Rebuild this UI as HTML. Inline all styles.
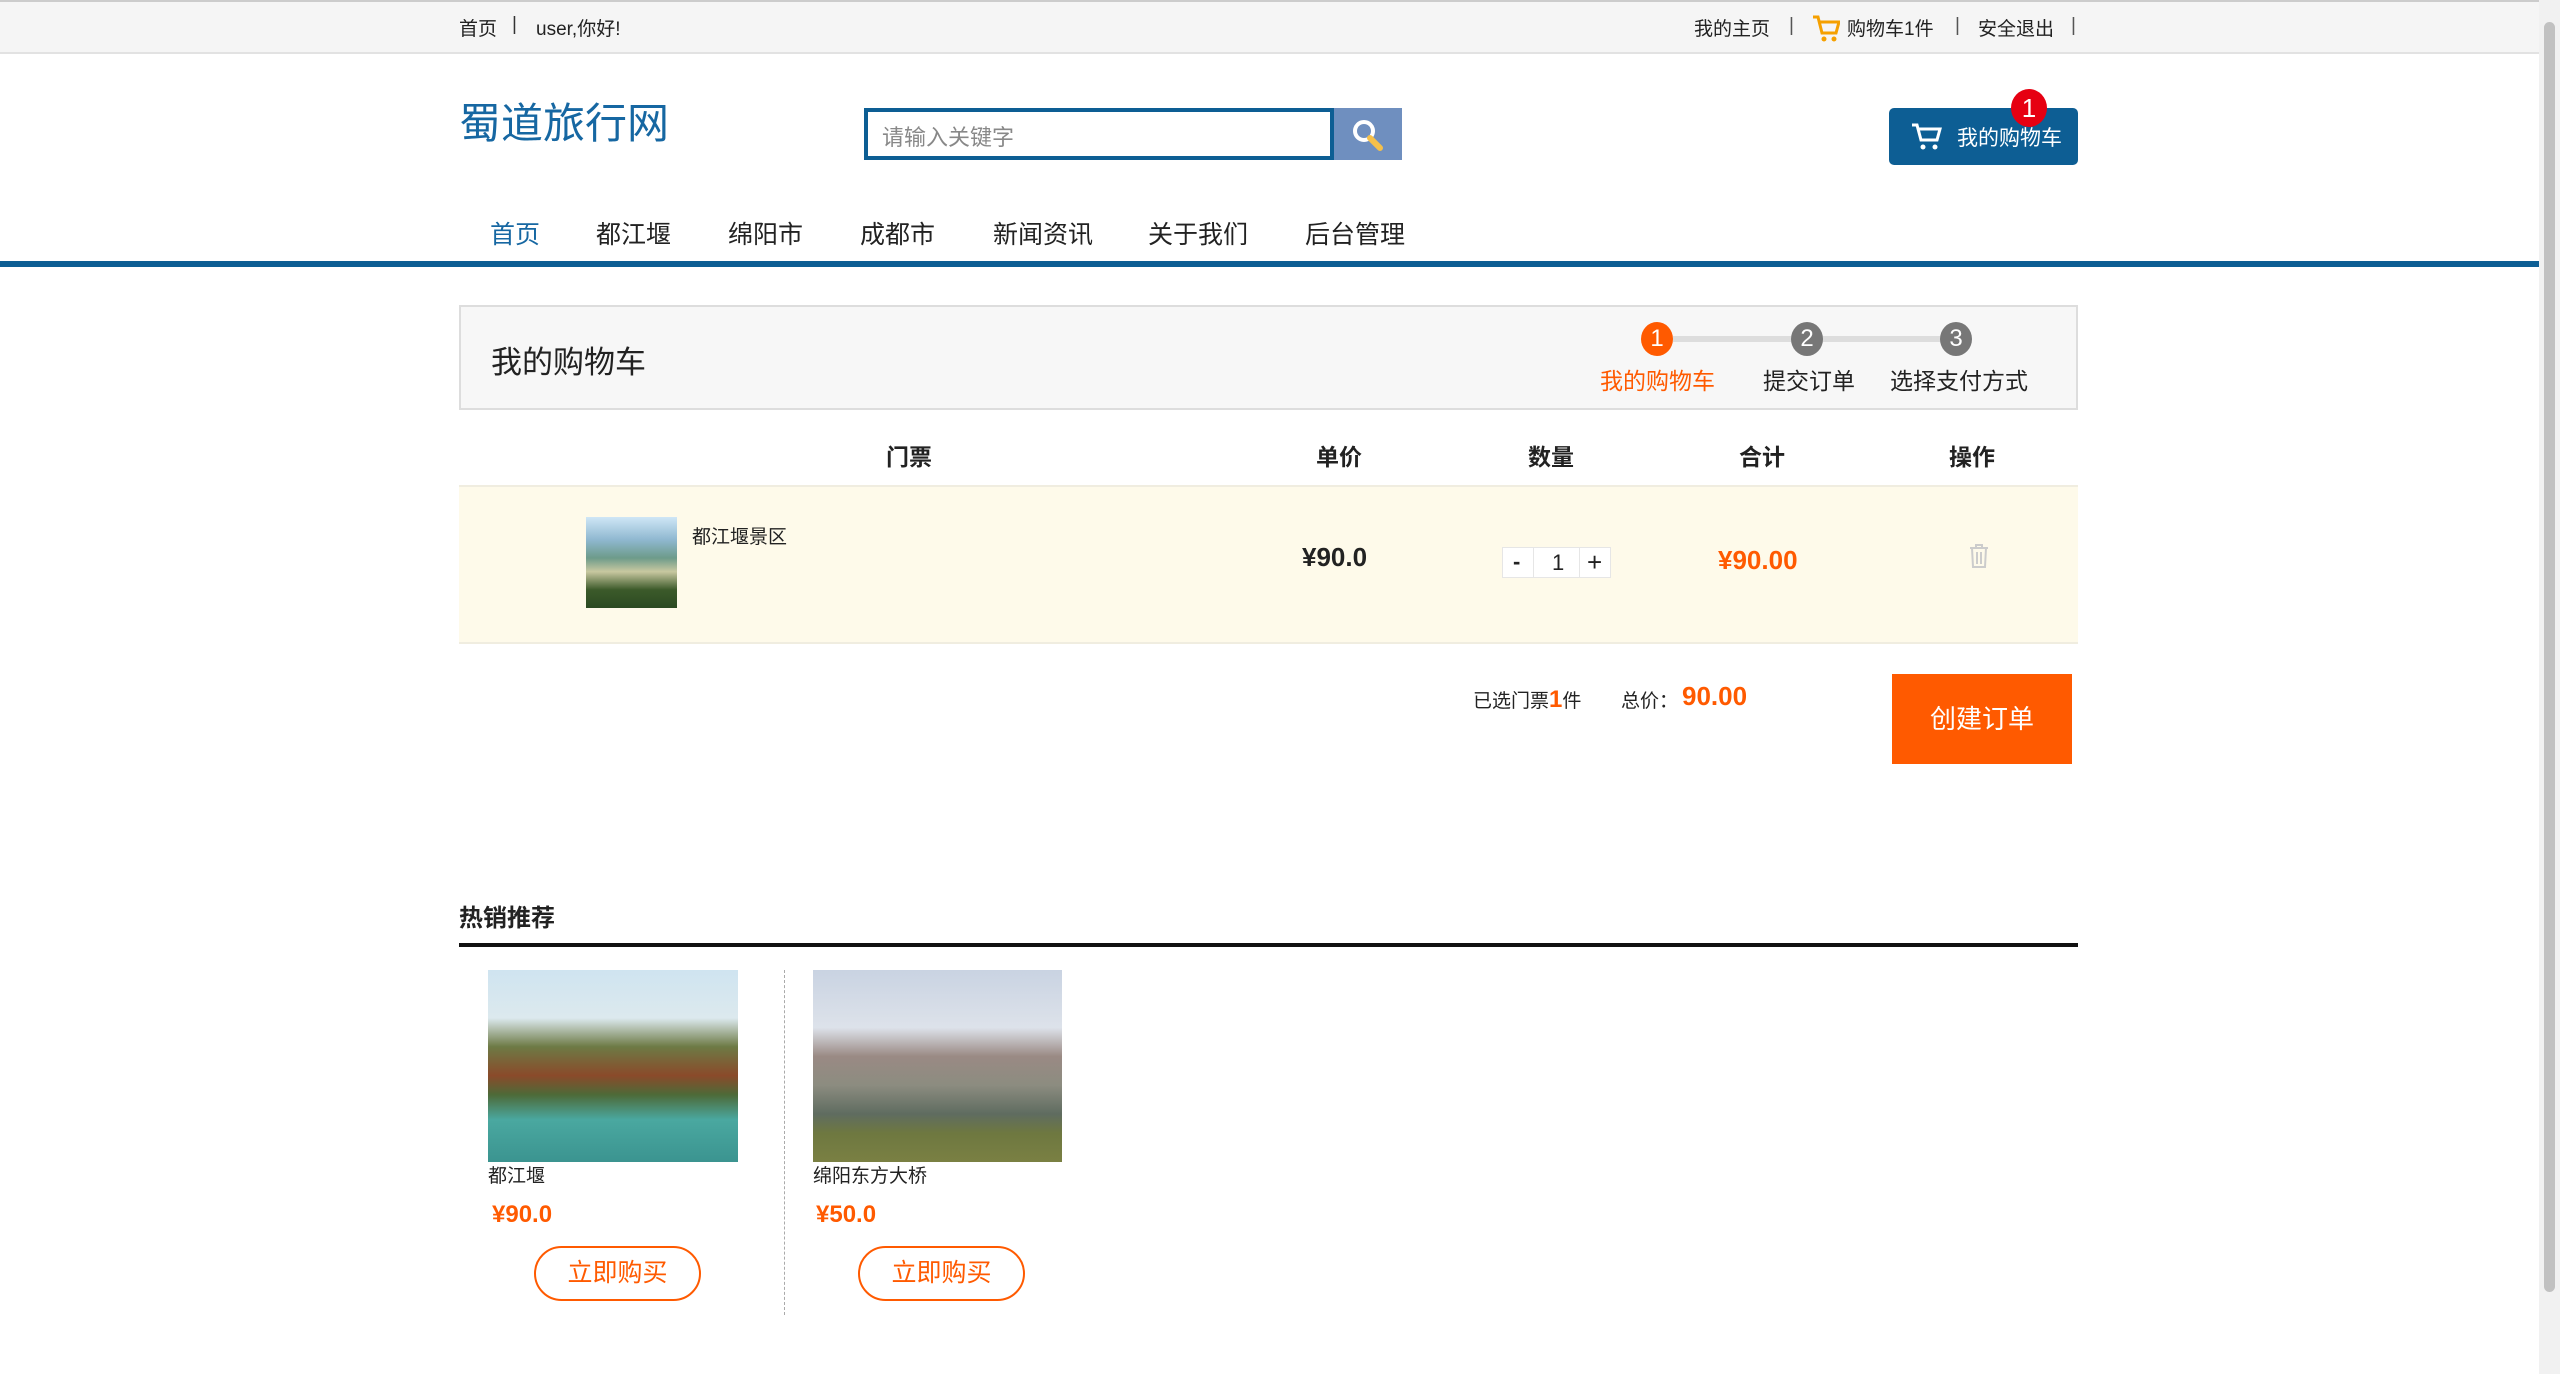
<!DOCTYPE html>
<html><head><meta charset="utf-8"><style>
*{margin:0;padding:0;box-sizing:border-box}
body{width:2560px;height:1374px;overflow:hidden;background:#fff;font-family:"Liberation Sans","Noto Sans CJK SC",sans-serif;color:#222;position:relative}
.a{position:absolute;white-space:nowrap}
.top{position:absolute;left:0;top:0;width:2539px;height:54px;background:#f5f5f5;border-top:2px solid #ccc;border-bottom:2px solid #e2e2e2;font-size:19px}
.sb{position:absolute;right:0;top:0;width:21px;height:1374px;background:#f1f1f1}
.sb div{position:absolute;left:5px;top:22px;width:11px;height:1270px;background:#c1c1c1;border-radius:6px}
.or{color:#ff5a00}
.circ{position:absolute;width:32px;height:34px;border-radius:50%;color:#fff;font-size:24px;text-align:center;line-height:34px}
</style></head><body>
<div class="top">
<span class="a" style="left:459px;top:12px">首页</span>
<span class="a" style="left:512px;top:12px;color:#333">|</span>
<span class="a" style="left:536px;top:12px">user,你好!</span>
<span class="a" style="left:1694px;top:12px">我的主页</span>
<span class="a" style="left:1789px;top:13px;color:#555">|</span>
<svg class="a" style="left:1812px;top:12px" width="28" height="30" viewBox="0 0 28 30"><path d="M1 3h5l4 16h14l3-11H8" fill="none" stroke="#f5a000" stroke-width="3"/><circle cx="12" cy="25" r="2.5" fill="#f5a000"/><circle cx="22" cy="25" r="2.5" fill="#f5a000"/></svg>
<span class="a" style="left:1847px;top:12px">购物车1件</span>
<span class="a" style="left:1955px;top:13px;color:#555">|</span>
<span class="a" style="left:1978px;top:12px">安全退出</span>
<span class="a" style="left:2071px;top:13px;color:#555">|</span>
</div>
<div class="sb"><div></div></div>
<div class="a" style="left:459px;top:90px;font-size:42px;color:#1667a2">蜀道旅行网</div>
<div class="a" style="left:864px;top:108px;width:470px;height:52px;border:4px solid #0d5e94;background:#fff"><span class="a" style="left:14px;top:8px;font-size:22px;color:#888">请输入关键字</span></div>
<div class="a" style="left:1334px;top:108px;width:68px;height:52px;background:#6f8fbf"><svg class="a" style="left:16px;top:9px" width="36" height="36" viewBox="0 0 36 36"><circle cx="14" cy="14" r="9" fill="none" stroke="#fff" stroke-width="4"/><path d="M20 21l10 10" stroke="#f5c04a" stroke-width="6" stroke-linecap="round"/></svg></div>
<div class="a" style="left:1889px;top:108px;width:189px;height:57px;background:#0d5e94;border-radius:5px">
<svg class="a" style="left:22px;top:14px" width="32" height="30" viewBox="0 0 32 30"><path d="M1 3h5l4 15h16l3-11H8" fill="none" stroke="#fff" stroke-width="3"/><circle cx="12" cy="25" r="2.5" fill="#fff"/><circle cx="24" cy="25" r="2.5" fill="#fff"/></svg>
<span class="a" style="left:68px;top:14px;font-size:21px;color:#fff">我的购物车</span></div>
<div class="a" style="left:2011px;top:89px;width:36px;height:38px;border-radius:50%;background:#e60012;color:#fff;font-size:26px;text-align:center;line-height:38px">1</div>
<div class="a" style="top:215px;font-size:25px;left:0">
<span class="a" style="left:490px;color:#1667a2">首页</span><span class="a" style="left:596px">都江堰</span><span class="a" style="left:728px">绵阳市</span><span class="a" style="left:860px">成都市</span><span class="a" style="left:993px">新闻资讯</span><span class="a" style="left:1148px">关于我们</span><span class="a" style="left:1305px">后台管理</span></div>
<div class="a" style="left:0;top:261px;width:2539px;height:6px;background:#0d5e94"></div>
<div class="a" style="left:459px;top:305px;width:1619px;height:105px;background:#f7f7f7;border:2px solid #ddd">
<span class="a" style="left:30px;top:30px;font-size:31px">我的购物车</span></div>
<div class="a" style="left:1673px;top:336px;width:284px;height:6px;background:#ddd"></div>
<div class="circ" style="left:1641px;top:322px;background:#ff5a00">1</div>
<div class="circ" style="left:1791px;top:322px;background:#777">2</div>
<div class="circ" style="left:1940px;top:322px;background:#777">3</div>
<span class="a or" style="left:1600px;top:362px;font-size:23px">我的购物车</span>
<span class="a" style="left:1763px;top:362px;font-size:23px">提交订单</span>
<span class="a" style="left:1890px;top:362px;font-size:23px">选择支付方式</span>
<div class="a" style="top:438px;left:0;font-size:23px;font-weight:bold">
<span class="a" style="left:886px">门票</span><span class="a" style="left:1316px">单价</span><span class="a" style="left:1528px">数量</span><span class="a" style="left:1739px">合计</span><span class="a" style="left:1949px">操作</span></div>
<div class="a" style="left:459px;top:485px;width:1619px;height:159px;background:#fefaea;border-top:2px solid #f0ede0;border-bottom:2px solid #f0ede0"></div>
<div class="a" style="left:586px;top:517px;width:91px;height:91px;background:linear-gradient(#cfe6f6 0%,#8fb8d0 25%,#6d9b8a 45%,#c8c8a0 60%,#3c5a2a 80%,#2b4a22 100%)"></div>
<span class="a" style="left:692px;top:522px;font-size:19px">都江堰景区</span>
<span class="a" style="left:1302px;top:542px;font-size:26px;font-weight:bold">¥90.0</span>
<div class="a" style="left:1502px;top:547px;width:109px;height:31px;background:#fff;border:1px solid #e6e6e6;font-size:22px">
<span class="a" style="left:10px;top:1px;font-weight:bold">-</span><span class="a" style="left:30px;top:0;width:1px;height:30px;background:#e6e6e6"></span><span class="a" style="left:49px;top:2px">1</span><span class="a" style="left:76px;top:0;width:1px;height:30px;background:#e6e6e6"></span><span class="a" style="left:84px;top:-1px;font-size:26px">+</span></div>
<span class="a or" style="left:1718px;top:545px;font-size:26px;font-weight:bold">¥90.00</span>
<svg class="a" style="left:1968px;top:543px" width="22" height="26" viewBox="0 0 22 26"><path d="M2 5h18M8 5V2h6v3M4 5l1 19h12l1-19M9 9v12M13 9v12" fill="none" stroke="#ccc" stroke-width="2"/></svg>
<span class="a" style="left:1473px;top:686px;font-size:19px">已选门票<b class="or" style="font-size:24px">1</b>件</span>
<span class="a" style="left:1621px;top:686px;font-size:19px">总价：</span>
<span class="a or" style="left:1682px;top:681px;font-size:26px;font-weight:bold">90.00</span>
<div class="a" style="left:1892px;top:674px;width:180px;height:90px;background:#ff5a00;color:#fff;font-size:26px;text-align:center;line-height:90px">创建订单</div>
<span class="a" style="left:459px;top:898px;font-size:24px;font-weight:bold">热销推荐</span>
<div class="a" style="left:459px;top:943px;width:1619px;height:4px;background:#111"></div>
<div class="a" style="left:488px;top:970px;width:250px;height:192px;background:linear-gradient(#cfe4f0 0%,#dce9ee 25%,#6d7a45 40%,#8a4a2a 55%,#4d6a38 65%,#4aa8a0 78%,#3b9490 100%)"></div>
<div class="a" style="left:813px;top:970px;width:249px;height:192px;background:linear-gradient(#c9d3e2 0%,#dde2ea 30%,#9a8a84 45%,#8c8c80 60%,#5f6c60 75%,#6e7840 85%,#7a8043 100%)"></div>
<div class="a" style="left:784px;top:970px;height:345px;border-left:1px dashed #aaa"></div>
<span class="a" style="left:488px;top:1161px;font-size:19px">都江堰</span>
<span class="a" style="left:813px;top:1161px;font-size:19px">绵阳东方大桥</span>
<span class="a or" style="left:492px;top:1201px;font-size:24px;font-weight:bold">¥90.0</span>
<span class="a or" style="left:816px;top:1201px;font-size:24px;font-weight:bold">¥50.0</span>
<div class="a or" style="left:534px;top:1246px;width:167px;height:55px;border:2px solid #ff5a00;border-radius:28px;text-align:center;line-height:51px;font-size:25px">立即购买</div>
<div class="a or" style="left:858px;top:1246px;width:167px;height:55px;border:2px solid #ff5a00;border-radius:28px;text-align:center;line-height:51px;font-size:25px">立即购买</div>
</body></html>
